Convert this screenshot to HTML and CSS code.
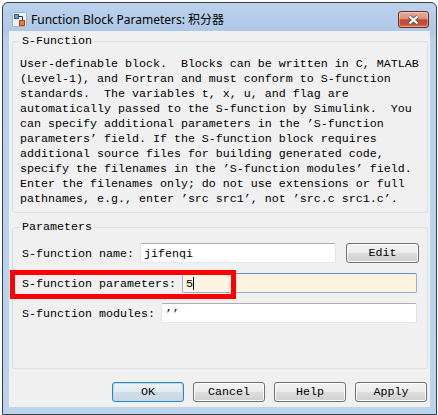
FILE: index.html
```html
<!DOCTYPE html>
<html>
<head>
<meta charset="utf-8">
<link rel="stylesheet" href="styles.css">
</head>
<body>
<div class="window">
  <div class="titlebar">
    <svg class="app-icon" width="15" height="15" viewBox="0 0 15 15">
      <rect x="0.5" y="0.5" width="14" height="14" rx="1" fill="#eef3f8" stroke="#9fb3c8"/>
      <rect x="2.5" y="2.5" width="4" height="4" fill="#6a9bd8" stroke="#2f5fa0"/>
      <path d="M6.5 4.5 H10.5 V8" stroke="#333" fill="none"/>
      <rect x="7.5" y="8.5" width="5" height="5" fill="#f07a30" stroke="#b83a10"/>
    </svg>
    <span class="title">Function Block Parameters: 积分器</span>
    <div class="close-btn">
      <svg width="13" height="10" viewBox="0 0 13 10">
        <path d="M2.5 1.5 L10.5 8.5 M10.5 1.5 L2.5 8.5" stroke="#5e5e5e" stroke-width="4" fill="none"/>
        <path d="M2.5 1.5 L10.5 8.5 M10.5 1.5 L2.5 8.5" stroke="#ffffff" stroke-width="2.2" fill="none"/>
      </svg>
    </div>
  </div>
  <div class="client">
    <fieldset class="group group-desc">
      <legend>S-Function</legend>
      <div class="desc">User-definable block.  Blocks can be written in C, MATLAB
(Level-1), and Fortran and must conform to S-function
standards.  The variables t, x, u, and flag are
automatically passed to the S-function by Simulink.  You
can specify additional parameters in the ’S-function
parameters’ field. If the S-function block requires
additional source files for building generated code,
specify the filenames in the ’S-function modules’ field.
Enter the filenames only; do not use extensions or full
pathnames, e.g., enter ’src src1’, not ’src.c src1.c’.</div>
    </fieldset>
    <fieldset class="group group-params">
      <legend>Parameters</legend>
      <div class="rows">
        <div class="row">
          <span class="label">S-function name:</span>
          <div class="textbox">jifenqi</div>
          <button class="btn btn-edit">Edit</button>
        </div>
        <div class="row row-highlight">
          <span class="label">S-function parameters:</span>
          <div class="textbox focused">5<span class="caret"></span></div>
          <div class="highlight"></div>
        </div>
        <div class="row">
          <span class="label">S-function modules:</span>
          <div class="textbox">’’</div>
        </div>
      </div>
    </fieldset>
    <div class="buttons">
      <button class="btn btn-default">OK</button>
      <button class="btn">Cancel</button>
      <button class="btn">Help</button>
      <button class="btn">Apply</button>
    </div>
  </div>
</div>
</body>
</html>
```
FILE: styles.css
```css
* { box-sizing: border-box; }
html, body { margin: 0; padding: 0; background: #ffffff; }
body { width: 438px; height: 415px; overflow: hidden; }

.window {
  margin: 2px 0 0 2px;
  width: 435px;
  height: 413px;
  border: 1px solid #3a3f46;
  border-radius: 6px 6px 0 0;
  background: linear-gradient(#bcd2ec, #aec8e7 28px, #b9d1ea 40px, #bcd3ec);
  display: flex;
  flex-direction: column;
}

.titlebar {
  height: 28px;
  flex: none;
  display: flex;
  align-items: flex-start;
  padding: 8px 7px 0 9px;
}
.app-icon { margin-top: 1px; flex: none; }
.title {
  margin: 1px 0 0 4px;
  font-family: "Noto Sans", "Noto Sans CJK SC", sans-serif;
  font-size: 12px;
  line-height: 16px;
  color: #000;
  white-space: nowrap;
}
.close-btn {
  margin-left: auto;
  width: 31px;
  height: 17px;
  border: 1px solid #6d2a1f;
  border-radius: 3px;
  background: linear-gradient(#e8ab9d 0%, #da8f7e 45%, #c6482f 52%, #c44b31 80%, #d87759 100%);
  box-shadow: inset 0 0 0 1px rgba(255,255,255,0.35);
  display: flex;
  align-items: center;
  justify-content: center;
}

.client {
  margin: 0 6px;
  height: 376px;
  flex: none;
  background: #f0f0f0;
  display: flex;
  flex-direction: column;
}

.group {
  border: 1px solid #d5dfe5;
  border-radius: 3px;
  margin: 3px 2px 0 3px;
  min-width: 0;
}
.group legend {
  padding: 0 2px;
  font-family: "Liberation Mono", monospace;
  font-size: 11.67px;
  line-height: 14px;
  color: #000;
}
.group-desc { padding: 9px 10px 5px 7px; }
.group-params { padding: 9px 10px 45px 7px; margin-top: 7px; }

.desc {
  white-space: pre;
  font-family: "Liberation Mono", monospace;
  font-size: 11.67px;
  line-height: 15px;
  color: #000;
}

.rows {
  margin-left: 2px;
  display: flex;
  flex-direction: column;
  gap: 10px;
}
.row {
  display: flex;
  align-items: flex-start;
  height: 20px;
}
.row-highlight { position: relative; }
.label {
  white-space: pre;
  font-family: "Liberation Mono", monospace;
  font-size: 11.67px;
  line-height: 17px;
  padding-top: 3px;
  margin-right: 6px;
  color: #000;
}
.textbox {
  flex: 1;
  height: 20px;
  background: #ffffff;
  border: 1px solid #e2e3ea;
  border-top-color: #abadb3;
  border-bottom-color: #e3e9ef;
  border-radius: 2px;
  padding: 3px 0 0 3px;
  font-family: "Liberation Mono", monospace;
  font-size: 11.67px;
  line-height: 14px;
  color: #000;
  white-space: pre;
}
.textbox.focused {
  background: #fdf3e1;
  border-color: #8fb3d6;
  border-top-color: #5f8fbe;
}
.caret {
  display: inline-block;
  width: 1px;
  height: 13px;
  background: #000;
  vertical-align: -3px;
}
.highlight {
  position: absolute;
  left: -12px;
  top: -3px;
  width: 226px;
  height: 29px;
  border: 5px solid #ff0000;
}

.btn {
  width: 72px;
  height: 20px;
  padding: 0;
  border: 1px solid #707070;
  border-radius: 3px;
  background: linear-gradient(#f2f2f2 0%, #ebebeb 50%, #dddddd 50%, #cfcfcf 100%);
  box-shadow: inset 0 0 0 1px #fcfcfc;
  font-family: "Liberation Mono", monospace;
  font-size: 11.67px;
  line-height: 16px;
  color: #000;
}
.btn-edit {
  width: 73px;
  margin-left: 10px;
  margin-right: -2px;
}
.btn-default {
  border-color: #3c7fb1;
  box-shadow: inset 0 0 0 1px #a9e2f7;
  background: linear-gradient(#eaf2f8 0%, #e0eaf2 50%, #d0dde8 50%, #c8d8e5 100%);
}

.buttons {
  margin-top: 13px;
  padding-right: 3px;
  display: flex;
  justify-content: flex-end;
  gap: 9px;
}
```
